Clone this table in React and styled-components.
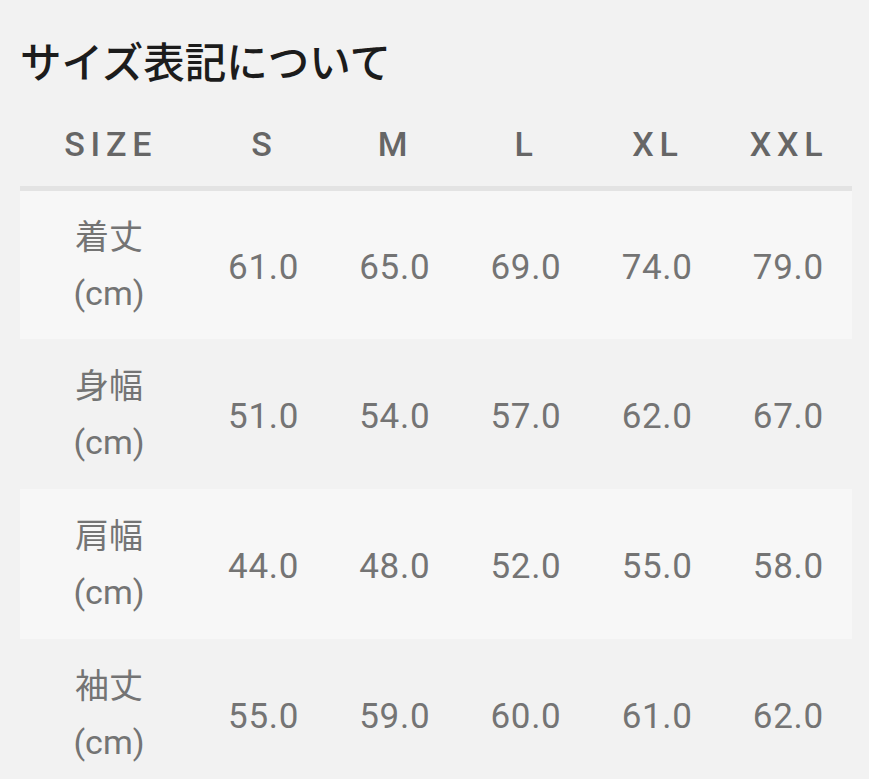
import React from 'react'
import styled, { createGlobalStyle } from 'styled-components'

const GlobalStyle = createGlobalStyle`
  html, body {
    margin: 0;
    padding: 0;
    background: #f2f2f2;
  }
  body {
    font-family: Roboto, "Noto Sans CJK JP", sans-serif;
  }
`

const Page = styled.div`
  width: 869px;
  height: 779px;
  overflow: hidden;
  box-sizing: border-box;
  padding: 35px 17px 0 20px;
  background: #f2f2f2;
`

const Title = styled.h2`
  margin: 0 0 20px 0;
  font-family: "Noto Sans CJK JP", sans-serif;
  font-size: 41.5px;
  line-height: 50px;
  font-weight: 500;
  color: #1c1c1c;
`

const Table = styled.table`
  width: 832px;
  border-collapse: collapse;
  table-layout: fixed;
`

const HeadCell = styled.th`
  height: 77px;
  padding: 0 0 4px 0.16em;
  font-family: Roboto, sans-serif;
  font-size: 34px;
  font-weight: 500;
  letter-spacing: 0.17em;
  color: #666;
  text-align: center;
  vertical-align: middle;
  border-bottom: 5px solid #e3e3e3;
`

const Row = styled.tr`
  height: 150px;
  background: ${p => (p.$alt ? '#f2f2f2' : '#f7f7f7')};
`

const LabelCell = styled.td`
  padding: 0 0 0 2px;
  text-align: center;
  vertical-align: middle;
  font-family: Roboto, "Noto Sans CJK JP", sans-serif;
  font-size: 34px;
  line-height: 56px;
  color: #747474;
`

const Cell = styled.td`
  padding: 6px 0 0 4px;
  text-align: center;
  vertical-align: middle;
  font-family: Roboto, sans-serif;
  font-size: 35px;
  letter-spacing: 0.02em;
  color: #747474;
`

const sizes = ['S', 'M', 'L', 'XL', 'XXL']

const rows = [
  { label: '着丈', values: ['61.0', '65.0', '69.0', '74.0', '79.0'] },
  { label: '身幅', values: ['51.0', '54.0', '57.0', '62.0', '67.0'] },
  { label: '肩幅', values: ['44.0', '48.0', '52.0', '55.0', '58.0'] },
  { label: '袖丈', values: ['55.0', '59.0', '60.0', '61.0', '62.0'] },
]

export default function App() {
  return (
    <Page>
      <GlobalStyle />
      <Title>サイズ表記について</Title>
      <Table>
        <colgroup>
          <col style={{ width: 176 }} />
          {sizes.map(s => <col key={s} />)}
        </colgroup>
        <thead>
          <tr>
            <HeadCell>SIZE</HeadCell>
            {sizes.map(s => <HeadCell key={s}>{s}</HeadCell>)}
          </tr>
        </thead>
        <tbody>
          {rows.map((r, i) => (
            <Row key={r.label} $alt={i % 2 === 1}>
              <LabelCell>
                {r.label}
                <br />
                (cm)
              </LabelCell>
              {r.values.map((v, j) => <Cell key={j}>{v}</Cell>)}
            </Row>
          ))}
        </tbody>
      </Table>
    </Page>
  )
}
